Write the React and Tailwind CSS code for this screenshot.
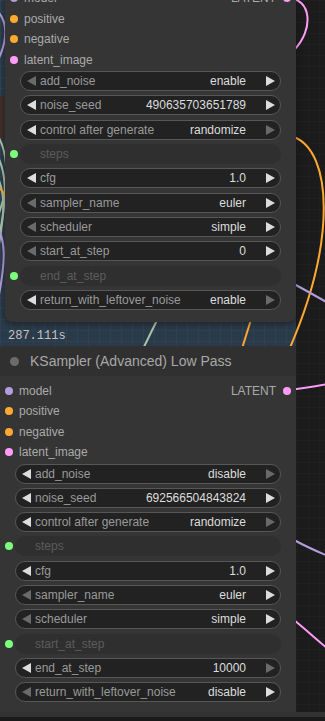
import React from 'react';

// ComfyUI canvas: two KSampler (Advanced) nodes stacked over a group.
const FONT = "font-['Liberation_Sans',Arial,sans-serif]";

const SLOT = {
  model: '#b39ddb',
  clip: '#ffa931',
  latent: '#ff9cf9',
  int: '#7cff7c',
};

function Arrow({ dir, on }) {
  const fill = on ? '#dddddd' : '#6a6a6a';
  return (
    <svg width="9" height="10" viewBox="0 0 9 10" className="shrink-0">
      {dir === 'left' ? <polygon points="9,0 9,10 0,5" fill={fill} /> : <polygon points="0,0 0,10 9,5" fill={fill} />}
    </svg>
  );
}

function Widget({ label, value, left = true, right = true }) {
  return (
    <div className="flex h-5 items-center pl-[5px] pr-[15px]">
      <span className="w-[10px] shrink-0" />
      <div className="flex h-5 flex-1 items-center rounded-full border border-[#575757] bg-[#222222] pl-[6px] pr-[5px] text-[12px] leading-none">
        <Arrow dir="left" on={left} />
        <span className="ml-[4px] text-[#9a9a9a]">{label}</span>
        <span className="ml-auto text-[#dddddd]">{value}</span>
        <span className="ml-[20px]"><Arrow dir="right" on={right} /></span>
      </div>
    </div>
  );
}

function Converted({ label }) {
  return (
    <div className="flex h-5 items-center pl-[5px] pr-[15px]">
      <span className="h-2 w-2 shrink-0 rounded-full" style={{ background: SLOT.int }} />
      <div className="ml-[2px] flex h-5 flex-1 items-center rounded-full bg-[#2f2f2f] pl-[20px] text-[12px] leading-none text-[#5c5c5c]">
        {label}
      </div>
    </div>
  );
}

function Slot({ label, color, output }) {
  return (
    <div className="flex h-[20.5px] items-center pl-[5px] pr-[5px] text-[12px] leading-none text-[#aaaaaa]">
      <span className="h-2 w-2 shrink-0 rounded-full" style={{ background: color }} />
      <span className="ml-[6px]">{label}</span>
      {output && (
        <>
          <span className="ml-auto mr-[7px]">{output.label}</span>
          <span className="h-2 w-2 shrink-0 rounded-full" style={{ background: output.color }} />
        </>
      )}
    </div>
  );
}

function Slots() {
  return (
    <div className="flex flex-col">
      <Slot label="model" color={SLOT.model} output={{ label: 'LATENT', color: SLOT.latent }} />
      <Slot label="positive" color={SLOT.clip} />
      <Slot label="negative" color={SLOT.clip} />
      <Slot label="latent_image" color={SLOT.latent} />
    </div>
  );
}

function Canvas() {
  return (
    <svg className="absolute inset-0" width="325" height="721" viewBox="0 0 325 721">
      <defs>
        <pattern id="grid" width="11" height="11" patternUnits="userSpaceOnUse">
          <path d="M11 0H0V11" fill="none" stroke="#242424" strokeWidth="1" />
        </pattern>
        <pattern id="ggrid" width="11" height="11" patternUnits="userSpaceOnUse">
          <path d="M11 0H0V11" fill="none" stroke="#33475a" strokeWidth="1" />
        </pattern>
      </defs>
      <rect width="325" height="721" fill="#1b1b1b" />
      <rect width="325" height="721" fill="url(#grid)" />
      <rect x="-2" y="0" width="298" height="350" fill="#2b3a48" />
      <rect x="-2" y="0" width="298" height="350" fill="url(#ggrid)" />
      <rect x="-2" y="96" width="8" height="44" fill="#3f2f2d" />

      {/* left edge wires */}
      <path d="M-4,10 C8,20 8,40 -2,60" fill="none" stroke="#b39ddb" strokeWidth="2" />
      <path d="M-6,130 C10,150 10,190 -4,220" fill="none" stroke="#a9c4a8" strokeWidth="2" />
      <path d="M-6,150 C8,170 8,200 -2,240" fill="none" stroke="#a9c4a8" strokeWidth="2" />
      <path d="M-6,170 C6,190 6,210 -4,260" fill="none" stroke="#a9c4a8" strokeWidth="2" />
      <path d="M0,188 L6,196" fill="none" stroke="#ffa931" strokeWidth="2" />
      <path d="M-4,224 C6,240 6,260 -2,300" fill="none" stroke="#b39ddb" strokeWidth="2" />

      {/* band between nodes */}
      <path d="M162,310 L140,355" fill="none" stroke="#a9c4a8" strokeWidth="2" />
      <path d="M254,310 L240,355" fill="none" stroke="#ffa931" strokeWidth="2" />

      {/* right side wires */}
      <path d="M287,-2 C312,-2 314,30 294,50" fill="none" stroke="#ff9cf9" strokeWidth="2" />
      <path d="M294,137 C332,152 337,240 289,350" fill="none" stroke="#ffa931" strokeWidth="2" />
      <path d="M294,284 C305,290 316,296 328,303" fill="none" stroke="#b39ddb" strokeWidth="2" />
      <path d="M287,390 C300,389 312,387 328,384" fill="none" stroke="#ff9cf9" strokeWidth="2" />
      <path d="M294,540 C305,546 316,551 328,556" fill="none" stroke="#b39ddb" strokeWidth="2" />
      <path d="M294,620 C305,629 315,638 328,649" fill="none" stroke="#ff9cf9" strokeWidth="2" />
    </svg>
  );
}

export default function App() {
  return (
    <div className={`relative h-[721px] w-[325px] overflow-hidden bg-[#1b1b1b] ${FONT}`}>
      <Canvas />

      {/* upper KSampler (title scrolled off) */}
      <div className="absolute left-[5px] top-[-12px] w-[291px] rounded-b-lg bg-[#353535] pb-[12px] shadow-[0_2px_6px_rgba(0,0,0,0.4)]">
        <Slots />
        <div className="mt-[1px] flex flex-col gap-[4.33px]">
          <Widget label="add_noise" value="enable" left={false} />
          <Widget label="noise_seed" value="490635703651789" />
          <Widget label="control after generate" value="randomize" right={false} />
          <Converted label="steps" />
          <Widget label="cfg" value="1.0" />
          <Widget label="sampler_name" value="euler" left={false} />
          <Widget label="scheduler" value="simple" left={false} />
          <Widget label="start_at_step" value="0" left={false} />
          <Converted label="end_at_step" />
          <Widget label="return_with_leftover_noise" value="enable" right={false} />
        </div>
      </div>

      <div className="absolute left-[8px] top-[330px] font-['Liberation_Mono',monospace] text-[12px] leading-none text-[#c4c4c4]">
        287.111s
      </div>

      {/* KSampler (Advanced) Low Pass */}
      <div className="absolute left-0 top-[346px] w-[296px] bg-[#353535]">
        <div className="flex h-[30px] items-center bg-[#303030] pl-[10px]">
          <span className="h-[9px] w-[9px] rounded-full bg-[#6b6b6b]" />
          <span className="ml-[11px] text-[14px] leading-none text-[#a8a8a8]">KSampler (Advanced) Low Pass</span>
        </div>
        <div className="pb-[10px] pt-[4.5px]">
          <Slots />
          <div className="mt-[1px] flex flex-col gap-[4.33px]">
            <Widget label="add_noise" value="disable" right={false} />
            <Widget label="noise_seed" value="692566504843824" />
            <Widget label="control after generate" value="randomize" right={false} />
            <Converted label="steps" />
            <Widget label="cfg" value="1.0" />
            <Widget label="sampler_name" value="euler" left={false} />
            <Widget label="scheduler" value="simple" left={false} />
            <Converted label="start_at_step" />
            <Widget label="end_at_step" value="10000" right={false} />
            <Widget label="return_with_leftover_noise" value="disable" left={false} />
          </div>
        </div>
      </div>

      <div className="absolute bottom-0 left-0 flex w-[325px] flex-col">
        <div className="h-[5px] bg-[#323232]" />
        <div className="h-[4px] bg-[#1a1a1a]" />
      </div>
    </div>
  );
}
